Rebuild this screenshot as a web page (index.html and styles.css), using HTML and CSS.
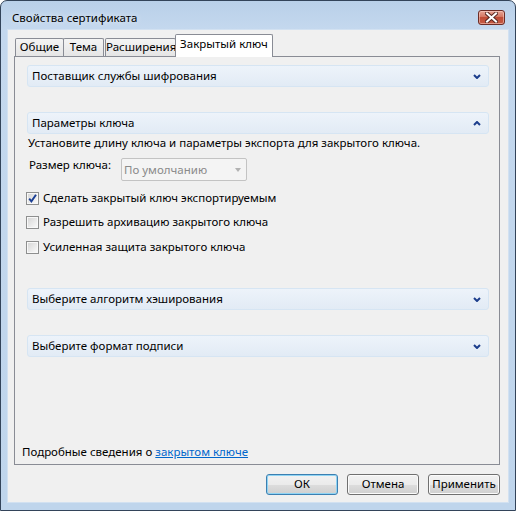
FILE: index.html
```html
<!DOCTYPE html>
<html lang="ru">
<head>
<meta charset="utf-8">
<title>Свойства сертификата</title>
<link rel="stylesheet" href="styles.css">
</head>
<body>
<div class="window">
  <div class="titlebar">
    <span class="title">Свойства сертификата</span>
    <div class="close">
      <svg width="13" height="11" viewBox="0 0 13 11">
        <path d="M2 1.5 L11 9.5 M11 1.5 L2 9.5" stroke="#5a2a24" stroke-width="4" stroke-linecap="square" fill="none"/>
        <path d="M2 1.5 L11 9.5 M11 1.5 L2 9.5" stroke="#ffffff" stroke-width="2" stroke-linecap="square" fill="none"/>
      </svg>
    </div>
  </div>
  <div class="client">
    <div class="tabs">
      <div class="tab t1">Общие</div>
      <div class="tab t2">Тема</div>
      <div class="tab t3">Расширения</div>
      <div class="tab t4 active">Закрытый ключ</div>
    </div>
    <div class="panel">
      <div class="section s1">
        <span>Поставщик службы шифрования</span>
        <svg class="chev" width="8" height="5" viewBox="0 0 8 5"><polyline points="1,1 4,4 7,1" fill="none" stroke="#1c3d8c" stroke-width="2"/></svg>
      </div>
      <div class="section s2">
        <span>Параметры ключа</span>
        <svg class="chev" width="8" height="5" viewBox="0 0 8 5"><polyline points="1,4 4,1 7,4" fill="none" stroke="#1c3d8c" stroke-width="2"/></svg>
      </div>
      <div class="desc">Установите длину ключа и параметры экспорта для закрытого ключа.</div>
      <div class="sizerow">
        <span class="sizelabel">Размер ключа:</span>
        <div class="select"><span>По умолчанию</span><span class="arrow"></span></div>
      </div>
      <div class="check c1">
        <span class="box"><svg width="11" height="11" viewBox="0 0 11 11"><path d="M2.2 5.6 L4.4 8.4 L9 1.8" fill="none" stroke="#1b3f94" stroke-width="1.9"/></svg></span>
        <span>Сделать закрытый ключ экспортируемым</span>
      </div>
      <div class="check c2">
        <span class="box"></span>
        <span>Разрешить архивацию закрытого ключа</span>
      </div>
      <div class="check c3">
        <span class="box"></span>
        <span>Усиленная защита закрытого ключа</span>
      </div>
      <div class="section s3">
        <span>Выберите алгоритм хэширования</span>
        <svg class="chev" width="8" height="5" viewBox="0 0 8 5"><polyline points="1,1 4,4 7,1" fill="none" stroke="#1c3d8c" stroke-width="2"/></svg>
      </div>
      <div class="section s4">
        <span>Выберите формат подписи</span>
        <svg class="chev" width="8" height="5" viewBox="0 0 8 5"><polyline points="1,1 4,4 7,1" fill="none" stroke="#1c3d8c" stroke-width="2"/></svg>
      </div>
      <div class="more">Подробные сведения о <a href="#" class="link">закрытом ключе</a></div>
    </div>
    <div class="buttons">
      <div class="btn default">ОК</div>
      <div class="btn">Отмена</div>
      <div class="btn">Применить</div>
    </div>
  </div>
</div>
</body>
</html>
```

FILE: styles.css
```css
* { box-sizing: border-box; }
html, body { margin: 0; padding: 0; }
body {
  font-family: "Noto Sans", "Open Sans", sans-serif;
  font-size: 11.5px;
  color: #000;
  background: #ffffff;
}
.window {
  width: 516px;
  height: 511px;
  border: 1px solid #33445a;
  border-radius: 7px 7px 0 0;
  background: linear-gradient(to bottom, #b9d0e9 0px, #c4d8ee 28px, #bfd5ec 100%);
  display: flex;
  flex-direction: column;
  overflow: hidden;
}
.titlebar {
  height: 29px;
  flex: none;
  display: flex;
  align-items: flex-start;
  padding: 0 10px 0 11px;
}
.title {
  margin-top: 9px;
  line-height: 16px;
  color: #000;
  text-shadow: 0 0 6px rgba(255,255,255,0.8);
}
.close {
  margin-left: auto;
  margin-top: 9px;
  width: 27px;
  height: 15px;
  border: 1px solid #6d2c25;
  border-radius: 3px;
  background: linear-gradient(to bottom, #e7a596 0%, #d47763 45%, #c04d37 50%, #c55a43 100%);
  box-shadow: inset 0 0 0 1px rgba(255,220,210,0.5);
  display: flex;
  align-items: center;
  justify-content: center;
}
.client {
  flex: 1;
  margin: 0 7px 8px 7px;
  background: #f0f0f0;
  box-shadow: 0 0 0 1px #d2e1f1;
  display: flex;
  flex-direction: column;
}
.tabs {
  display: flex;
  align-items: flex-end;
  height: 22px;
  margin: 4px 0 0 7px;
  position: relative;
  z-index: 1;
}
.tab {
  height: 18px;
  border: 1px solid #898c95;
  border-bottom: none;
  border-radius: 2px 2px 0 0;
  background: linear-gradient(to bottom, #f4f4f4, #e5e5e5);
  line-height: 16px;
  text-align: center;
  white-space: nowrap;
}
.t1 { width: 49px; }
.t2 { width: 41px; margin-left: -1px; }
.t3 { width: 71px; margin-left: 1px; }
.t4 { width: 98px; margin-left: -1px; }
.tab.active {
  height: 23px;
  margin-bottom: -1px;
  background: #ffffff;
  padding-top: 1px;
}
.panel {
  height: 409px;
  flex: none;
  margin: 0 8px 0 6px;
  border: 1px solid #898c95;
  background: #f0f0f0;
  padding: 8px 10px 4px 7px;
  display: flex;
  flex-direction: column;
}
.section {
  height: 22px;
  margin-left: 5px;
  display: flex;
  align-items: center;
  justify-content: space-between;
  padding: 0 7px 0 4px;
  border: 1px solid #d6e5f3;
  border-radius: 3px;
  background: linear-gradient(to bottom, #edf3fa, #e2ebf5);
  line-height: 16px;
}
.chev { display: block; }
.s2 { margin-top: 25px; }
.s3 { margin-top: 33px; }
.s4 { margin-top: 25px; }
.desc {
  margin: 1px 0 0 6px;
  line-height: 16px;
  white-space: nowrap;
}
.sizerow {
  display: flex;
  align-items: flex-start;
  margin: 7px 0 0 7px;
}
.sizelabel {
  width: 92px;
  line-height: 16px;
  margin-top: -1px;
}
.select {
  width: 126px;
  height: 23px;
  border: 1px solid #c3c3c3;
  border-radius: 2px;
  background: #f4f4f4;
  color: #8a8a8a;
  display: flex;
  align-items: center;
  justify-content: space-between;
  padding: 0 5px 0 2px;
  line-height: 16px;
}
.arrow {
  width: 0;
  height: 0;
  border-left: 3.5px solid transparent;
  border-right: 3.5px solid transparent;
  border-top: 4px solid #b2b2b2;
}
.check {
  display: flex;
  align-items: center;
  height: 16px;
  line-height: 16px;
  margin-left: 4px;
}
.c1 { margin-top: 9px; }
.c2 { margin-top: 8px; }
.c3 { margin-top: 9px; }
.box {
  width: 13px;
  height: 13px;
  margin-right: 4px;
  border: 1px solid #8e8f8f;
  background: linear-gradient(135deg, #d4d4d4 0%, #f0f0f0 70%, #fbfbfb 100%);
  box-shadow: inset 0 0 0 1px #f8f8f8;
  display: flex;
  align-items: center;
  justify-content: center;
}
.box svg { display: block; }
.more {
  margin-top: auto;
  line-height: 16px;
}
.link {
  color: #0066cc;
  text-decoration: underline;
}
.buttons {
  display: flex;
  justify-content: flex-end;
  gap: 9px;
  margin: 9px 8px 0 0;
}
.btn {
  width: 72px;
  height: 21px;
  border: 1px solid #707070;
  border-radius: 3px;
  background: linear-gradient(to bottom, #f2f2f2 0%, #ebebeb 50%, #dddddd 51%, #cfcfcf 100%);
  box-shadow: inset 0 0 0 1px #fbfbfb;
  text-align: center;
  line-height: 18px;
}
.btn.default {
  border-color: #3c7fb1;
  box-shadow: inset 0 0 0 1px #8fd4f4;
}
```
